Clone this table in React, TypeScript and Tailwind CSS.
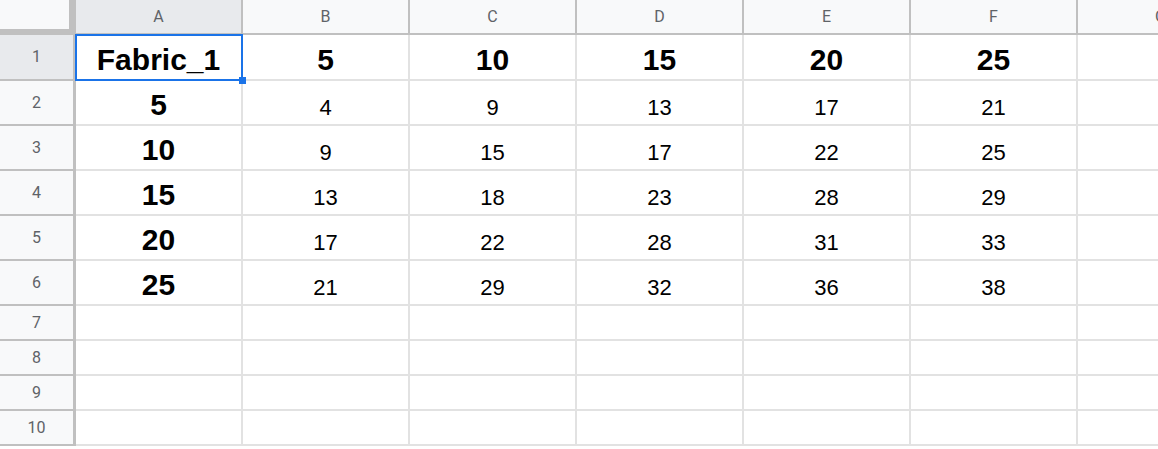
const columns = ["A", "B", "C", "D", "E", "F", "G"];

const data: (string | number)[][] = [
  ["Fabric_1", 5, 10, 15, 20, 25],
  [5, 4, 9, 13, 17, 21],
  [10, 9, 15, 17, 22, 25],
  [15, 13, 18, 23, 28, 29],
  [20, 17, 22, 28, 31, 33],
  [25, 21, 29, 32, 36, 38],
];

const rowHeights = ["h-[46px]", "h-[45px]", "h-[45px]", "h-[45px]", "h-[45px]", "h-[45px]", "h-[35px]", "h-[35px]", "h-[35px]", "h-[35px]"];

const App = () => {
  return (
    <div className="w-[1158px] h-[449px] overflow-hidden bg-white font-['Liberation_Sans',Arial,sans-serif]">
      {/* Column headers */}
      <div className="flex h-[35px]">
        <div className="w-[76px] shrink-0 bg-[#f8f9fa] border-r-[7px] border-b-[6px] border-[#c0c0c0]" />
        {columns.map((col, i) => (
          <div
            key={col}
            className={`w-[167px] shrink-0 flex items-center justify-center border-r-2 border-b-2 border-[#c0c0c0] text-[16px] text-[#5f6368] font-['Roboto',sans-serif] ${
              i === 0 ? "bg-[#e8eaed]" : "bg-[#f8f9fa]"
            }`}
          >
            {col}
          </div>
        ))}
      </div>

      {/* Rows */}
      {rowHeights.map((h, r) => (
        <div key={r} className={`flex ${h}`}>
          <div
            className={`w-[76px] shrink-0 flex items-center justify-center border-r-[3px] border-b-2 border-[#c0c0c0] text-[16px] text-[#5f6368] font-['Roboto',sans-serif] ${
              r === 0 ? "bg-[#e8eaed]" : "bg-[#f8f9fa]"
            }`}
          >
            {r + 1}
          </div>
          {columns.map((col, c) => {
            const value = data[r]?.[c];
            const bold = r === 0 || c === 0;
            const selected = r === 0 && c === 0;
            return (
              <div
                key={col}
                className={`relative w-[167px] shrink-0 flex items-end justify-center border-r-2 border-b-2 border-[#e2e2e2] text-black ${
                  selected ? "z-10" : ""
                }`}
              >
                {value !== undefined && (
                  <span
                    className={
                      bold
                        ? "leading-none text-[30px] font-bold pb-[4px]"
                        : "leading-none text-[22px] pb-[5px]"
                    }
                  >
                    {value}
                  </span>
                )}
                {selected && (
                  <>
                    <div className="absolute -left-[1px] -top-[1px] -right-[2px] -bottom-[2px] border-2 border-[#1a73e8] pointer-events-none" />
                    <div className="absolute -right-[5px] -bottom-[5px] w-[7px] h-[7px] bg-[#1a73e8]" />
                  </>
                )}
              </div>
            );
          })}
        </div>
      ))}
    </div>
  );
};

export default App;
